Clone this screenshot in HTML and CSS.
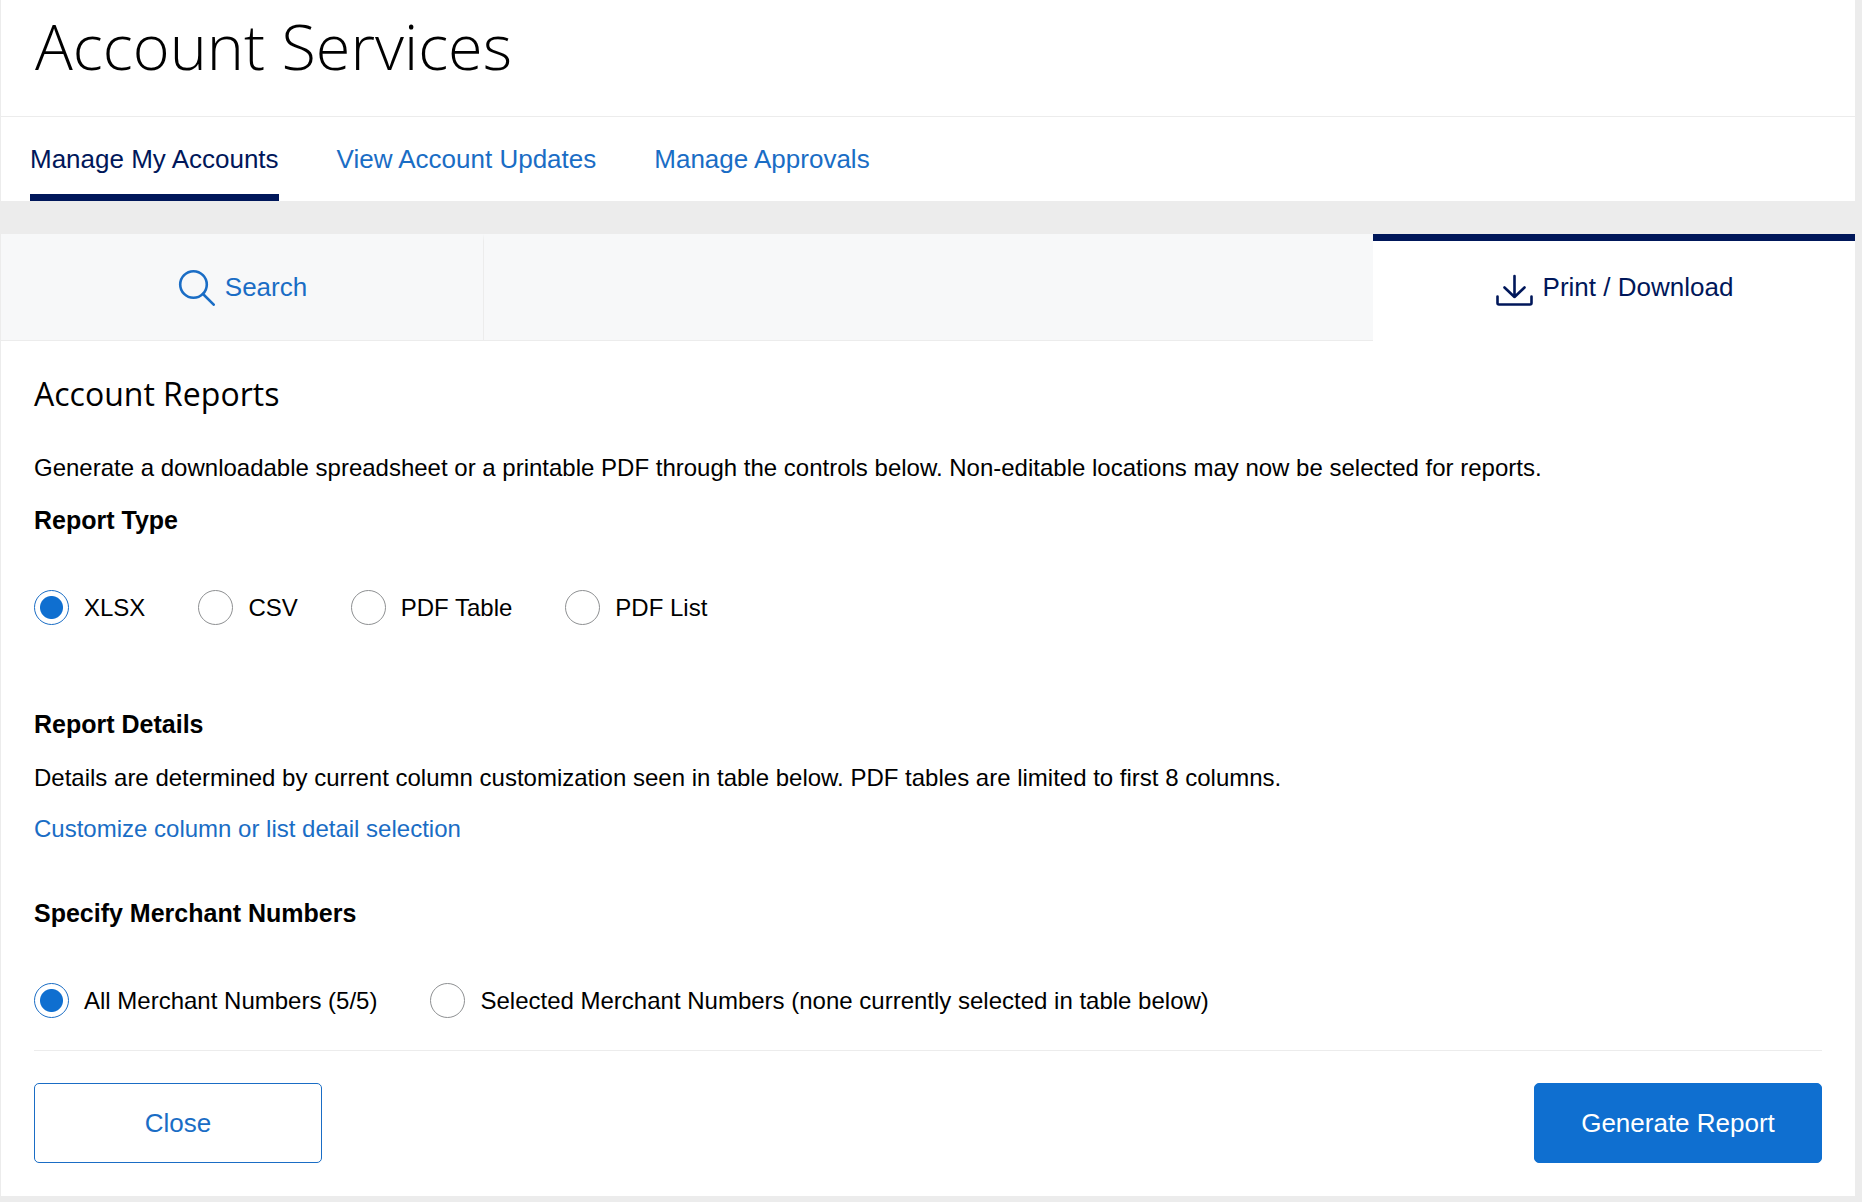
FILE: index.html
```html
<!DOCTYPE html>
<html lang="en">
<head>
<meta charset="utf-8">
<meta name="viewport" content="width=device-width, initial-scale=1">
<title>Account Services</title>
<link rel="stylesheet" href="styles.css">
</head>
<body>
<div class="page">
  <header class="header">
    <h1 class="title">Account Services</h1>
    <nav class="nav" aria-label="Account services">
      <a class="nav-link nav-link-active" href="#manage" aria-current="page">Manage My Accounts</a>
      <a class="nav-link" href="#updates">View Account Updates</a>
      <a class="nav-link" href="#approvals">Manage Approvals</a>
    </nav>
  </header>

  <main class="card">
    <div class="tabs">
      <button class="tab" type="button">
        <svg class="icon" viewBox="0 0 38 38" fill="none" stroke="currentColor" stroke-width="2.6" stroke-linecap="round" aria-hidden="true">
          <circle cx="16.500" cy="16.500" r="13.300"/>
          <path d="M26 26 L36.700 36.700"/>
        </svg>
        <span>Search</span>
      </button>
      <div class="tab-filler"></div>
      <button class="tab tab-active" type="button">
        <svg class="icon" viewBox="0 0 38 38" fill="none" stroke="currentColor" stroke-width="2.6" stroke-linecap="round" stroke-linejoin="round" aria-hidden="true">
          <path d="M19.500 8 V29 M9.500 19.500 L19.500 29 L29.500 19.500"/>
          <path d="M2.500 28.500 V35 Q2.500 36.500 4 36.500 H35 Q36.500 36.500 36.500 35 V28.500"/>
        </svg>
        <span>Print / Download</span>
      </button>
    </div>

    <form class="content">
      <h2 class="section-title">Account Reports</h2>
      <p class="text">Generate a downloadable spreadsheet or a printable PDF through the controls below. Non-editable locations may now be selected for reports.</p>

      <h3 class="subheading" id="type-heading">Report Type</h3>
      <div class="options" role="radiogroup" aria-labelledby="type-heading">
        <label class="option"><input class="radio" type="radio" name="type" checked>XLSX</label>
        <label class="option"><input class="radio" type="radio" name="type">CSV</label>
        <label class="option"><input class="radio" type="radio" name="type">PDF Table</label>
        <label class="option"><input class="radio" type="radio" name="type">PDF List</label>
      </div>

      <h3 class="subheading subheading-details">Report Details</h3>
      <p class="text">Details are determined by current column customization seen in table below. PDF tables are limited to first 8 columns.</p>
      <a class="text link" href="#customize">Customize column or list detail selection</a>

      <h3 class="subheading subheading-merchants" id="merchant-heading">Specify Merchant Numbers</h3>
      <div class="options" role="radiogroup" aria-labelledby="merchant-heading">
        <label class="option"><input class="radio" type="radio" name="merchants" checked>All Merchant Numbers (5/5)</label>
        <label class="option"><input class="radio" type="radio" name="merchants">Selected Merchant Numbers (none currently selected in table below)</label>
      </div>

      <div class="actions">
        <button class="button" type="button">Close</button>
        <button class="button button-primary" type="button">Generate Report</button>
      </div>
    </form>
  </main>
</div>
</body>
</html>
```

FILE: styles.css
```css
* {
  box-sizing: border-box;
}

body {
  margin: 0;
  background: #ececec;
  color: #000;
  font-family: "Liberation Sans", Arial, sans-serif;
  font-size: 24px;
  line-height: 32px;
}

h1, h2, h3, p {
  margin: 0;
}

a {
  color: #1a6dc5;
  text-decoration: none;
}

button {
  font: inherit;
  cursor: pointer;
}

.page {
  padding: 0 7px 6px 1px;
}

.header,
.card {
  background: #fff;
}

.title {
  padding: 6px 34px 30px;
  border-bottom: 1px solid #ececec;
  font-family: "Open Sans", sans-serif;
  font-size: 63px;
  font-weight: 300;
  line-height: 80px;
}

.nav {
  display: flex;
  gap: 58px;
  padding: 0 29px;
}

.nav-link {
  padding: 26px 0 19px;
  border-bottom: 7px solid transparent;
  font-size: 26px;
}

.nav-link-active {
  border-color: #00175a;
  color: #00175a;
}

.card {
  margin-top: 33px;
}

.tabs {
  display: grid;
  grid-template-columns: 26fr 48fr 26fr;
}

.tab,
.tab-filler {
  border: 0;
  border-top: 7px solid #f7f8f9;
  border-bottom: 1px solid #ececec;
  background: #f7f8f9;
}

.tab {
  display: flex;
  align-items: center;
  justify-content: center;
  gap: 10px;
  height: 107px;
  padding: 0 0 8px;
  color: #1a6dc5;
  font-size: 26px;
}

.tab-filler {
  border-left: 1px solid #ececec;
}

.tab-active {
  border-top-color: #00175a;
  border-bottom-color: #fff;
  background: #fff;
  color: #00175a;
}

.icon {
  width: 38px;
  height: 38px;
}

.content {
  padding: 32px 33px 33px;
}

.section-title {
  margin-bottom: 37px;
  font-family: "Open Sans", sans-serif;
  font-size: 32px;
  font-weight: 400;
  line-height: 42px;
}

.subheading {
  margin: 20px 0;
  font-size: 25px;
  font-weight: 700;
}

.options {
  display: flex;
  gap: 53px;
  padding: 34px 0 32px;
}

.option {
  display: flex;
  align-items: center;
  gap: 15px;
}

.radio {
  width: 35px;
  height: 35px;
  margin: 0;
  border: 1px solid #8e9092;
  border-radius: 50%;
  background: #fff;
  appearance: none;
}

.radio:checked {
  border-color: #1a6dc5;
  background: radial-gradient(circle, #0f6fd0 11px, #fff 12px);
}

.subheading-details {
  margin-top: 51px;
  margin-bottom: 22px;
}

.link {
  display: inline-block;
  margin-top: 19px;
}

.subheading-merchants {
  margin-top: 52px;
}

.actions {
  display: flex;
  justify-content: space-between;
  padding-top: 32px;
  border-top: 1px solid #ececec;
}

.button {
  width: 288px;
  height: 80px;
  border: 1px solid #1a6dc5;
  border-radius: 5px;
  background: #fff;
  color: #1a6dc5;
  font-size: 26px;
}

.button-primary {
  border-color: #0f6fd0;
  background: #0f6fd0;
  color: #fff;
}
```
